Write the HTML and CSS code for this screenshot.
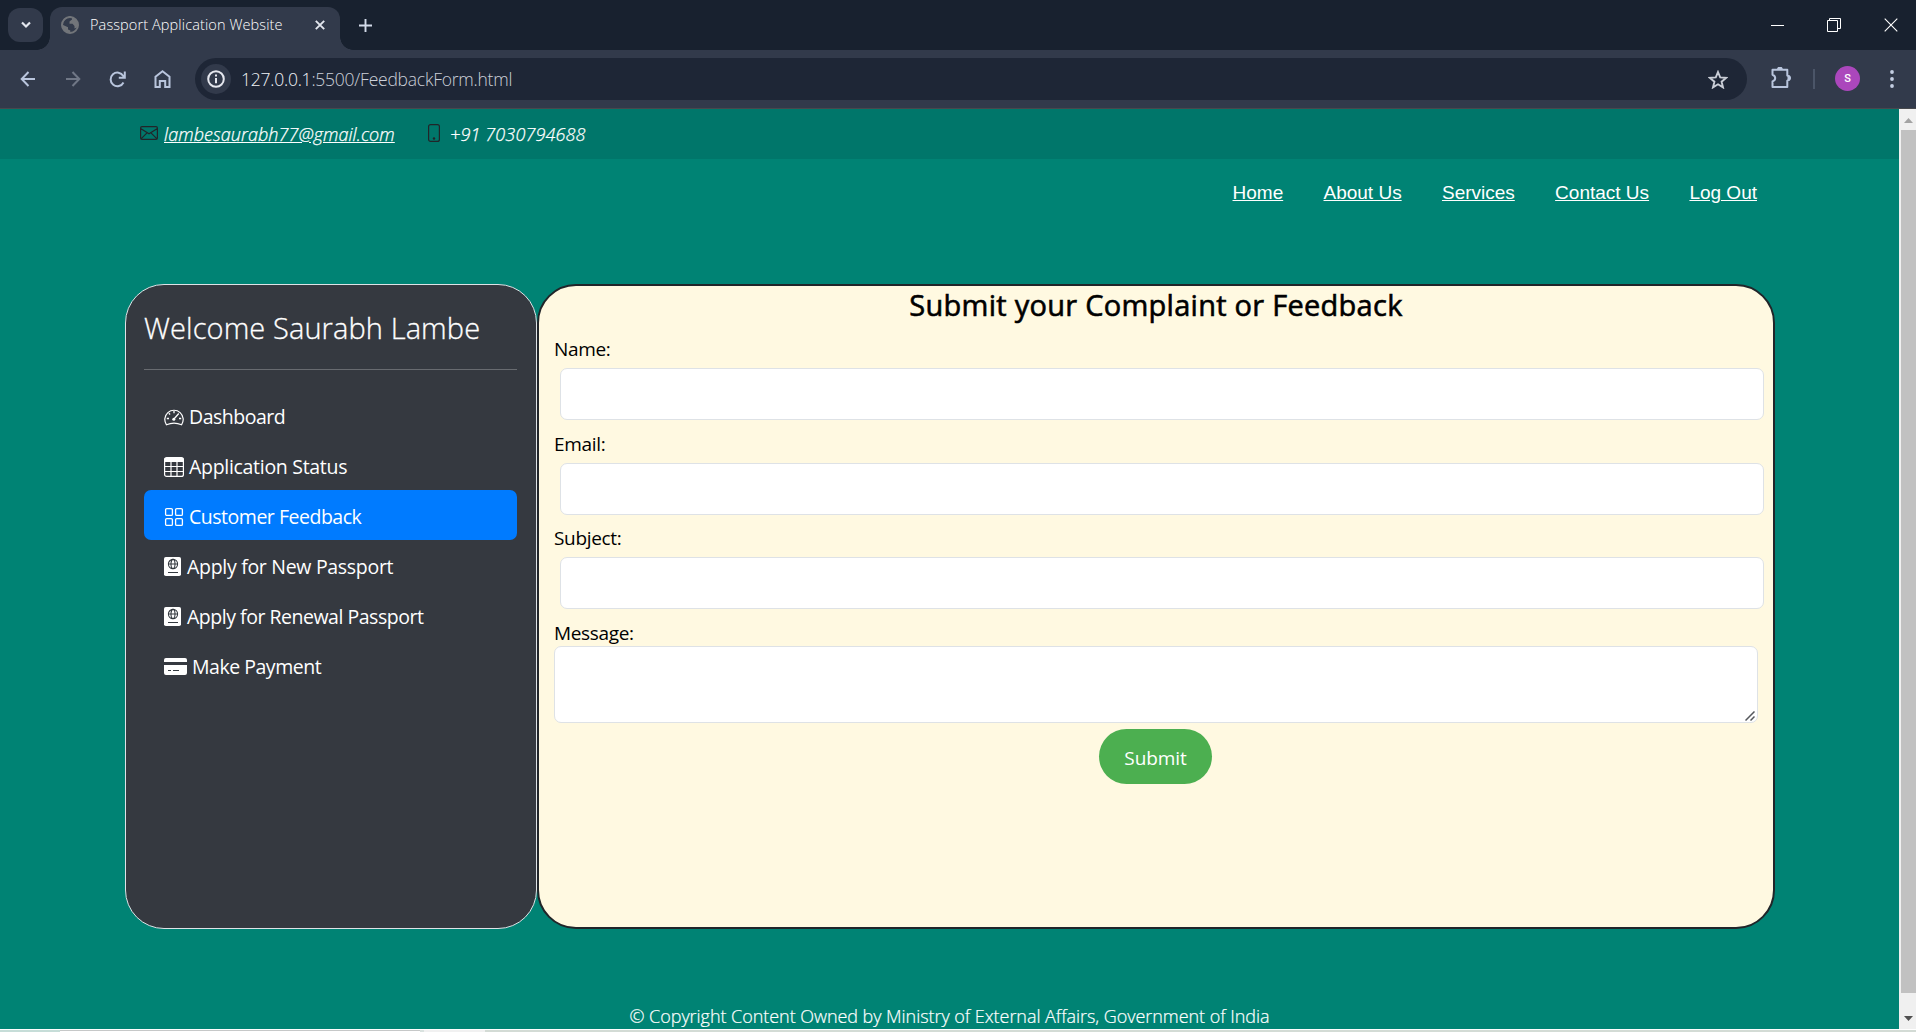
FILE: index.html
```html
<!DOCTYPE html>
<html lang="en">
<head>
<meta charset="utf-8">
<title>Passport Application Website</title>
<link rel="stylesheet" href="styles.css">
</head>
<body>
<header class="tabstrip">
  <div class="tab-search"><svg width="12" height="8" viewBox="0 0 12 8"><path d="M2 1.5l4 4 4-4" fill="none" stroke="#e3e6ee" stroke-width="2.2"/></svg></div>
  <div class="tab">
    <svg class="globe" width="18" height="18" viewBox="0 0 18 18"><circle cx="9" cy="9" r="8" fill="none" stroke="#72757a" stroke-width="2"/><path d="M2 6.5C4 2 8 1 11 1.5v2L8.500 5.500v2.200h3l2 2.300v2.500l2.500-1C17 7 16 4 13 2L9 0 4 2 1 6zM1 8.500l6 2.700v2.300l2.300 1v2.500C5 17 1 13 1 8.500z" fill="#72757a"/></svg>
    <span class="tab-title">Passport Application Website</span>
    <svg class="tab-close" width="10" height="10" viewBox="0 0 10 10"><path d="M.8.8l8.400 8.400M9.200.8L.8 9.200" stroke="#e3e6ee" stroke-width="1.900"/></svg>
  </div>
  <svg class="tab-new" width="13" height="13" viewBox="0 0 13 13"><path d="M6.500 0v13M0 6.500h13" stroke="#d3dbea" stroke-width="1.900"/></svg>
  <div class="window-controls">
    <svg width="14" height="14" viewBox="0 0 14 14"><path d="M1 7.500h13" stroke="#fff"/></svg>
    <svg width="14" height="14" viewBox="0 0 14 14"><path d="M.5 2.500h10v11H.5zM2.500 2.500v-2h11v10h-3" fill="none" stroke="#fff"/></svg>
    <svg width="14" height="14" viewBox="0 0 14 14"><path d="M.7.7l12.600 12.600M13.300.7L.7 13.300" stroke="#fff" stroke-width="1.100"/></svg>
  </div>
</header>
<div class="toolbar">
  <svg width="16" height="16" viewBox="0 0 16 16" class="nav-icon"><path d="M15 8H2M8.500 1L1.700 8l6.800 7" /></svg>
  <svg width="16" height="16" viewBox="0 0 16 16" class="nav-icon dim"><path d="M1 8h13M7.500 1l6.800 7-6.800 7"/></svg>
  <svg width="17" height="17" viewBox="0 0 17 17" class="nav-icon"><path d="M14.500 11.500A6.800 6.800 0 1 1 14.300 5l1.200 1.500M15.800.5v6.300H9.800"/></svg>
  <svg width="17" height="18" viewBox="0 0 17 18" class="nav-icon"><path d="M1.500 17V6.800l7-5.500 7 5.500V17h-4.300v-6H5.800v6z"/></svg>
  <div class="address">
    <div class="site-info"><svg width="18" height="18" viewBox="0 0 18 18"><circle cx="9" cy="9" r="7.800" fill="none" stroke="#e6e8ef" stroke-width="2"/><path d="M9 4.500v1.900M9 7.900v5.400" stroke="#e6e8ef" stroke-width="2"/></svg></div>
    <span class="url"><b>127.0.0.1</b>:5500/FeedbackForm.html</span>
    <svg class="star" width="20" height="19" viewBox="0 0 20 19"><path d="M10 2l2.200 5.400 5.800.5-4.400 3.800 1.400 5.700-5-3.100-5 3.100 1.400-5.700L2 7.900l5.800-.5z" fill="none" stroke="#c9cdd6" stroke-width="1.900"/></svg>
  </div>
  <svg class="puzzle" width="22" height="22" viewBox="0 0 22 22"><path d="M2.500 2.800h14.800v5.700q2.700.5 2.700 2.600t-2.700 2.600v6.200H2.500v-5.400q2.700-1 2.700-3.400T2.500 7.700z" fill="none" stroke="#b9c5dd" stroke-width="2" stroke-linejoin="round"/><path d="M7 2.500a2.900 2.900 0 0 1 5.800 0zM17.500 8.200a2.900 2.900 0 0 1 0 5.800z" fill="#b9c5dd"/></svg>
  <span class="divider"></span>
  <span class="avatar">S</span>
  <svg class="dots" width="4" height="18" viewBox="0 0 4 18"><g fill="#c4cee2"><circle cx="2" cy="2" r="1.900"/><circle cx="2" cy="9" r="1.900"/><circle cx="2" cy="16" r="1.900"/></g></svg>
</div>
<div class="viewport">
  <div class="page">
    <div class="contact-bar">
      <svg class="mail" width="18" height="14" viewBox="0 0 18 14"><path d="M2 .6h14Q17.400.6 17.400 2v10q0 1.400-1.400 1.400H2Q.6 13.400.6 12V2Q.6.6 2 .6zM1 2.800l8 5 8-5M1 12.800l6-6M17 12.800l-6-6" fill="none" stroke="#212529" stroke-width="1.200"/></svg>
      <a class="email">lambesaurabh77@gmail.com</a>
      <svg class="phone" width="12" height="18" viewBox="0 0 12 18"><rect x=".6" y=".6" width="10.800" height="16.800" rx="2" fill="none" stroke="#212529" stroke-width="1.200"/><circle cx="6" cy="14.500" r="1.200" fill="#212529"/></svg>
      <span class="tel">+91 7030794688</span>
    </div>
    <nav class="menu"><a>Home</a><a>About Us</a><a>Services</a><a>Contact Us</a><a>Log Out</a></nav>
    <main class="board">
      <aside class="sidebar">
        <h2>Welcome Saurabh Lambe</h2>
        <hr>
        <ul>
          <li class="near"><svg width="20" height="18" viewBox="0 0 20 18"><path d="M2.500 16.800A9.200 9.200 0 1 1 17.500 16.800Q10 13.500 2.500 16.800z" fill="none" stroke="#fff" stroke-width="1.200"/><path d="M10 3v2.300M4.800 5.200l1.300 1.300M2.800 10.500H5M15 10.500h2.200M14.800 5.500L9.500 11.500" stroke="#fff" stroke-width="1.300"/><circle cx="9.800" cy="11.300" r="1.500" fill="#fff"/></svg>Dashboard</li>
          <li class="near loose"><svg width="20" height="20" viewBox="0 0 20 20"><rect x=".6" y=".6" width="18.800" height="18.800" rx="2" fill="none" stroke="#fff" stroke-width="1.200"/><path d="M.6 1h18.800v4H.6z" fill="#fff"/><path d="M1 9.500h18M1 14.500h18M7 4v15M13 4v15" stroke="#fff" stroke-width="1.200"/></svg>Application Status</li>
          <li class="near active"><svg width="20" height="20" viewBox="0 0 20 20"><g fill="none" stroke="#fff" stroke-width="1.300"><rect x="1.600" y="1.600" width="6.800" height="6.800" rx="1.200"/><rect x="11.600" y="1.600" width="6.800" height="6.800" rx="1.200"/><rect x="1.600" y="11.600" width="6.800" height="6.800" rx="1.200"/><rect x="11.600" y="11.600" width="6.800" height="6.800" rx="1.200"/></g></svg>Customer Feedback</li>
          <li class="loose"><svg width="17" height="19" viewBox="0 0 17 19"><rect width="17" height="19" rx="1.800" fill="#fff"/><g fill="none" stroke="#343a40" stroke-width="1.100"><circle cx="9" cy="7" r="4.600"/><ellipse cx="9" cy="7" rx="2" ry="4.600"/><path d="M4.400 7h9.200M4 15.500h10"/></g></svg>Apply for New Passport</li>
          <li><svg width="17" height="19" viewBox="0 0 17 19"><rect width="17" height="19" rx="1.800" fill="#fff"/><g fill="none" stroke="#343a40" stroke-width="1.100"><circle cx="9" cy="7" r="4.600"/><ellipse cx="9" cy="7" rx="2" ry="4.600"/><path d="M4.400 7h9.200M4 15.500h10"/></g></svg>Apply for Renewal Passport</li>
          <li class="near"><svg width="23" height="17" viewBox="0 0 23 17"><path d="M2 0h19q2 0 2 2v2H0V2q0-2 2-2zM0 7h23v8q0 2-2 2H2q-2 0-2-2z" fill="#fff"/><path d="M4 12.500h3M9 12.500h6" stroke="#343a40"/></svg>Make Payment</li>
        </ul>
      </aside>
      <form class="panel">
        <h1>Submit your Complaint or Feedback</h1>
        <label>Name:</label><input class="field" type="text">
        <label class="tall">Email:</label><input class="field" type="text">
        <label>Subject:</label><input class="field" type="text">
        <label class="short">Message:</label><div class="area"><svg width="10" height="10" viewBox="0 0 10 10"><path d="M.5 9.500l9-9M5.500 9.500l4-4" stroke="#55585c" stroke-width="1.500"/></svg></div>
        <button type="button">Submit</button>
      </form>
    </main>
    <footer>© Copyright Content Owned by Ministry of External Affairs, Government of India</footer>
  </div>
  <div class="scrollbar">
    <svg width="9" height="5" viewBox="0 0 9 5"><path d="M4.500 0L9 5H0z" fill="#a3a3a3"/></svg>
    <div class="thumb"></div>
    <svg width="9" height="5" viewBox="0 0 9 5"><path d="M4.500 5L9 0H0z" fill="#505050"/></svg>
  </div>
</div>
<div class="under"><i class="u1"></i><i class="u2"></i><i class="u3"></i><i class="u4"></i></div>
</body>
</html>
```
FILE: styles.css
```css
* { box-sizing: border-box; }
body { margin: 0; width: 1916px; height: 1032px; overflow: hidden; display: flex; flex-direction: column; background: #323a4b; color: #fff; font-family: "Open Sans", "Noto Sans", sans-serif; }
svg { display: block; flex: none; }
h1, h2, ul, hr { margin: 0; padding: 0; }

/* Browser frame */
.tabstrip { flex: none; height: 50px; background: #18212f; display: flex; align-items: center; padding-left: 8px; }
.tab-search { width: 35px; height: 34px; border-radius: 12px; background: #323a4b; display: flex; align-items: center; justify-content: center; }
.tab { position: relative; width: 290px; height: 43px; margin: 7px 0 0 7px; padding: 0 15px 7px 11px; border-radius: 12px 12px 0 0; background: #323a4b; display: flex; align-items: center; }
.tab::before, .tab::after { content: ""; position: absolute; bottom: 0; width: 13px; height: 13px; }
.tab::before { left: -13px; background: radial-gradient(circle at 0 0, transparent 12.5px, #323a4b 13px); }
.tab::after { right: -13px; background: radial-gradient(circle at 100% 0, transparent 12.5px, #323a4b 13px); }
.tab-title { margin: -2px 0 0 11px; font-size: 14.5px; font-weight: 300; letter-spacing: .11px; white-space: nowrap; }
.tab-close { margin-left: auto; }
.tab-new { margin-left: 19px; }
.window-controls { margin-left: auto; padding-right: 18px; display: flex; gap: 43px; }
.toolbar { flex: none; height: 59px; border-bottom: 1px solid #47494d; display: flex; align-items: center; padding-left: 20px; }
.nav-icon { margin-right: 29px; fill: none; stroke: #b9c5dd; stroke-width: 2; }
.nav-icon.dim { stroke: #707786; }
.nav-icon + .nav-icon { margin-right: 28px; }
.address { width: 1552px; height: 42px; margin-left: -4px; border-radius: 21px; background: #1e2636; display: flex; align-items: center; padding: 0 19px 0 6px; }
.site-info { width: 30px; height: 30px; border-radius: 50%; background: #323a4b; display: flex; align-items: center; justify-content: center; }
.url { margin-left: 10px; font-size: 17.5px; font-weight: 300; letter-spacing: -.23px; color: #ccd0d9; white-space: nowrap; }
.url b { font-weight: 300; color: #f0f2f6; }
.star { margin-left: auto; }
.puzzle { margin: -3px 0 0 23px; }
.divider { width: 2px; height: 20px; margin-left: 21px; background: #4b5568; }
.avatar { width: 25px; height: 25px; margin: -1px 0 0 20px; border-radius: 50%; background: #ab47bc; font: 500 11px/25px Roboto, sans-serif; text-align: center; }
.dots { margin-left: 30px; }

/* Web page */
.viewport { flex: none; height: 920px; display: flex; }
.page { width: 1899px; background: #008374; }
.contact-bar { height: 50px; background: #00766a; display: flex; align-items: center; padding-left: 140px; font-size: 18px; font-weight: 300; -webkit-text-stroke: .25px #fff; font-style: italic; white-space: nowrap; }
.mail { margin-top: -2px; }
.email { margin-left: 6px; text-decoration: underline; width: 231px; letter-spacing: .07px; }
.phone { margin: -2px 0 0 33px; }
.tel { margin-left: 10px; letter-spacing: .13px; }
.menu { height: 125px; display: flex; justify-content: flex-end; gap: 40.3px; padding: 23px 142px 0 0; font: 19px/22px "Liberation Sans", Arial, sans-serif; }
.menu a { text-decoration: underline; }
.board { height: 645px; padding-left: 125px; display: flex; }
.sidebar { width: 412px; border: 1px solid #dee2e6; border-radius: 39px; background: #353940; padding: 23px 19px 23px 18px; }
.sidebar h2 { font-size: 29px; font-weight: 300; letter-spacing: .1px; -webkit-text-stroke: .3px #fff; line-height: 40px; white-space: nowrap; }
.sidebar hr { border: 0; height: 1px; margin: 21px 0 20px; background: #686b70; }
.sidebar ul { list-style: none; }
.sidebar li { height: 50px; padding: 3px 20px 0; border-radius: 7px; display: flex; align-items: center; gap: 6px; font-size: 19.5px; letter-spacing: -.48px; white-space: nowrap; }
.sidebar li.near { gap: 5px; }
.sidebar li.loose { letter-spacing: -.3px; }
.sidebar li.active { background: #007bff; }
.panel { width: 1238px; border: 2px solid #212529; border-radius: 39px; background: #fff9e1; padding: 0 15px; color: #000; }
.panel h1 { font-size: 29px; font-weight: 400; letter-spacing: .27px; -webkit-text-stroke: .6px #000; line-height: 38px; padding-bottom: 2px; text-align: center; }
label { display: block; height: 42px; padding-top: 10px; font-size: 19px; line-height: 26px; letter-spacing: -.33px; }
label.tall { height: 43px; padding-top: 11px; }
label.short { height: 37px; padding-top: 11px; }
.field { display: block; width: 1204px; height: 52px; margin: 0 0 0 6px; border: 1px solid #dee2e6; border-radius: 7px; background: #fff; }
.area { width: 1204px; height: 77px; border: 1px solid #dee2e6; border-radius: 7px; background: #fff; display: flex; align-items: flex-end; justify-content: flex-end; padding: 0 2px 1px; }
button { display: block; width: 113px; height: 55px; margin: 6px auto 0 545px; border: 0; border-radius: 27.5px; background: #4caf50; color: #fff; font: 19px "Open Sans", sans-serif; letter-spacing: -.1px; padding: 3px 0 0; }
footer { margin-top: 74px; text-align: center; font-size: 18px; font-weight: 300; -webkit-text-stroke: .2px #fff; line-height: 26px; letter-spacing: -.05px; }
.scrollbar { width: 17px; background: #f0f0f0; display: flex; flex-direction: column; align-items: center; padding: 9px 0 8px 2px; }
.thumb { align-self: stretch; height: 863px; margin: 7px 0 auto; background: #c1c1c1; }

/* Edge of the window behind */
.under { flex: none; height: 3px; border-top: 1px solid #fff; background: #d3dbd5; display: flex; }
.under i { height: 2px; }
.u1 { width: 60px; background: #c6ddd8; }
.u2 { width: 360px; background: #fff; border-top: 1px solid #c6c8c8; }
.u3 { width: 4px; background: #d9e2df; }
.u4 { width: 61px; background: #f1f1f1; }
```
